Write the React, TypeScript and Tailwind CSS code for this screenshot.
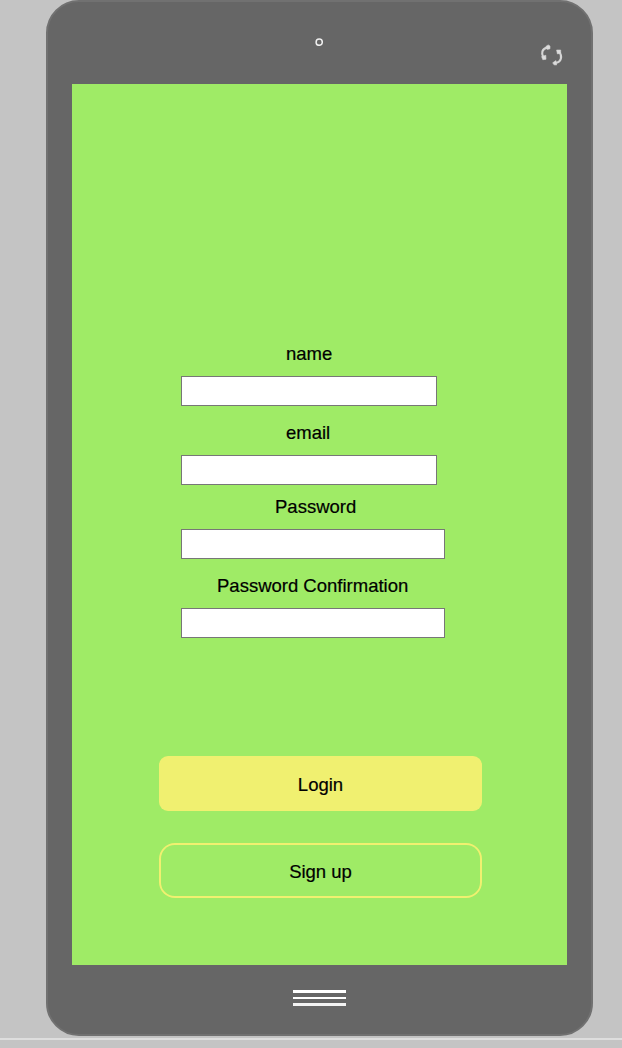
const fields = [
  { label: "name", labelClass: "pl-[105px]", inputClass: "w-[256px]", rowClass: "" },
  { label: "email", labelClass: "pl-[105px]", inputClass: "w-[256px]", rowClass: "mt-4" },
  { label: "Password", labelClass: "pl-[94px]", inputClass: "w-[264px]", rowClass: "mt-[11px]" },
  { label: "Password Confirmation", labelClass: "pl-[36px]", inputClass: "w-[264px]", rowClass: "mt-4" },
];

function RotateIcon() {
  return (
    <svg width="24" height="24" viewBox="0 0 24 24" fill="none" stroke="#d4d4d4" strokeWidth="2.1">
      <path d="M7.5 4.6C1.8 5.6 1 10.3 3.4 14.5" />
      <path d="M5.9 3.4L8.2 1.9L10 3V5.8L7.3 6.4Z" fill="#dcdcdc" strokeWidth="0.6" />
      <path d="M1.6 13.6L5.8 12.3L6 16.3L2.8 16.7Z" fill="#dcdcdc" strokeWidth="0.6" />
      <path d="M18.8 8.4C22.8 13 21.4 18.6 15.8 20" />
      <path d="M16.6 7H20.7V10.2L17.4 10.9Z" fill="#dcdcdc" strokeWidth="0.6" />
      <path d="M16 17.6L12.7 19.8L14 21.8L16.6 22Z" fill="#dcdcdc" strokeWidth="0.6" />
    </svg>
  );
}

export default function App() {
  return (
    <div className="flex h-[1048px] w-[622px] flex-col overflow-hidden bg-[#c4c4c4] font-['Liberation_Sans',Arial,sans-serif] text-[18.5px] leading-[22px] text-black [-webkit-text-stroke:0.2px_black]">
      <main className="ml-[46px] flex h-[1036px] w-[546.5px] shrink-0 flex-col rounded-[33px] border-2 border-[#717171] bg-[#666666] pl-6">
        <header className="flex h-[82px] shrink-0 items-start">
          <svg className="mt-9 ml-[243px]" width="8" height="8" viewBox="0 0 8 8" fill="none" stroke="#efefef" strokeWidth="1.5">
            <circle cx="4.2" cy="4.2" r="3.1" />
          </svg>
          <div className="mt-[41px] ml-[217px]">
            <RotateIcon />
          </div>
        </header>
        <section className="flex h-[881px] w-[495px] shrink-0 flex-col bg-[#9feb66]">
          <form className="mt-[259px] ml-[109px] flex flex-col items-start">
            {fields.map((field) => (
              <label key={field.label} className={`flex flex-col items-start ${field.rowClass}`}>
                <span className={`whitespace-nowrap ${field.labelClass}`}>{field.label}</span>
                <input
                  type={field.label.startsWith("Password") ? "password" : "text"}
                  className={`mt-[11px] h-[30px] rounded-none border border-[#777777] bg-white ${field.inputClass}`}
                />
              </label>
            ))}
          </form>
          <div className="mt-[118px] ml-[87px] flex flex-col items-start">
            <button className="flex h-[55px] w-[323px] items-center justify-center rounded-[9px] bg-[#f0f070] pt-[2px]">
              Login
            </button>
            <button className="mt-8 h-[55px] w-[323px] rounded-[16px] bg-[#f0f070] p-[2.4px]">
              <span className="flex h-full w-full items-center justify-center rounded-[13.6px] bg-[#9feb66] pt-[2px]">
                Sign up
              </span>
            </button>
          </div>
        </section>
        <footer className="ml-[221px] flex flex-col gap-[4px] pt-[25px]">
          <div className="h-[2.6px] w-[53px] bg-white" />
          <div className="h-[2.6px] w-[53px] bg-white" />
          <div className="h-[2.6px] w-[53px] bg-[#f3f3f3]" />
        </footer>
      </main>
      <div className="mt-[2px] h-[2px] w-full shrink-0 bg-[#dedede]" />
    </div>
  );
}
